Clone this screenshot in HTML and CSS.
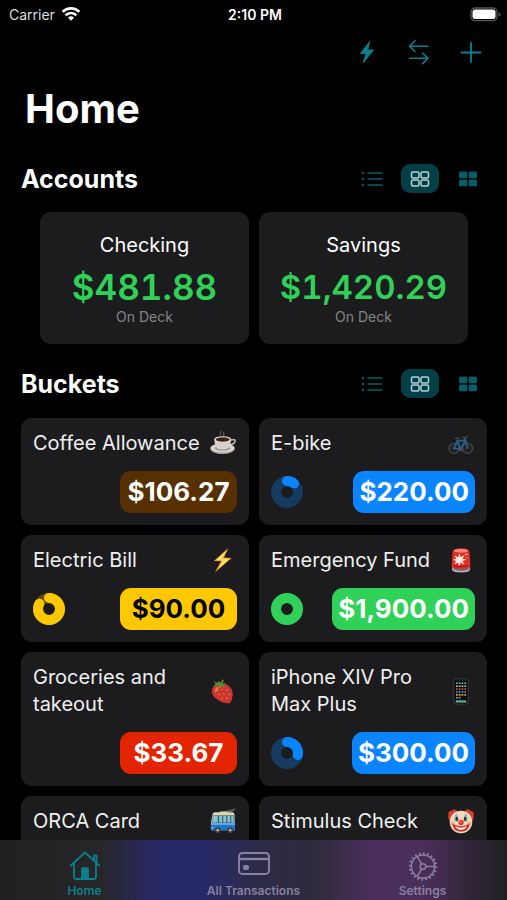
FILE: index.html
```html
<!DOCTYPE html>
<html lang="en">
<head>
    <meta charset="UTF-8">
    <meta name="viewport" content="width=device-width, initial-scale=1">
    <title>Home</title>
    <link rel="stylesheet" href="styles.css">
</head>
<body>

    <!-- shared icons -->
    <svg class="sprite" aria-hidden="true">
        <symbol id="icon-list" viewBox="0 0 22 18">
            <path d="M7 3h14M7 9h14M7 15h14" fill="none" stroke="currentColor" stroke-width="1.5" stroke-linecap="round"/>
            <circle cx="2" cy="3" r="1.2"/><circle cx="2" cy="9" r="1.2"/><circle cx="2" cy="15" r="1.2"/>
        </symbol>
        <symbol id="icon-grid" viewBox="0 0 22 18">
            <g fill="none" stroke="currentColor" stroke-width="1.5">
                <rect x="2.5" y="2" width="7.5" height="6" rx="1.5"/><rect x="12" y="2" width="7.5" height="6" rx="1.5"/>
                <rect x="2.5" y="10" width="7.5" height="6" rx="1.5"/><rect x="12" y="10" width="7.5" height="6" rx="1.5"/>
            </g>
        </symbol>
        <symbol id="icon-grid-fill" viewBox="0 0 22 18">
            <rect x="2" y="1.5" width="8.3" height="6.8" rx="1.5"/><rect x="11.7" y="1.5" width="8.3" height="6.8" rx="1.5"/>
            <rect x="2" y="9.5" width="8.3" height="6.8" rx="1.5"/><rect x="11.7" y="9.5" width="8.3" height="6.8" rx="1.5"/>
        </symbol>
    </svg>

    <div class="status-bar">
        <div class="carrier">
            <span>Carrier</span>
            <svg width="20" height="16" viewBox="0 0 20 16" fill="none" stroke="#fff" stroke-width="2.6">
                <path d="M1.6 5.8a12 12 0 0 1 16.8 0"/>
                <path d="M4.7 9.2a7.6 7.6 0 0 1 10.6 0"/>
                <path d="M10 14.8l-3-3.1a4.4 4.4 0 0 1 6 0z" fill="#fff" stroke="none"/>
            </svg>
        </div>
        <div class="time">2:10 PM</div>
        <div class="battery">
            <svg width="31" height="15" viewBox="0 0 31 15">
                <rect x="1" y="1" width="26" height="12.6" rx="4" fill="none" stroke="#56565a" stroke-width="1.3"/>
                <rect x="2.5" y="2.5" width="23" height="9.6" rx="2.5" fill="#fff"/>
                <path d="M28.6 5.2q2 .6 2 2.1t-2 2.1z" fill="#56565a"/>
            </svg>
        </div>
    </div>

    <div class="toolbar">
        <button type="button" aria-label="Quick add">
            <svg width="28" height="28" viewBox="0 0 28 28" fill="currentColor" stroke="currentColor" stroke-linejoin="round" stroke-width="1">
                <path d="M16.8 3.6L7.4 15.4h5.8l-3 9.4L20.5 12h-6z"/>
            </svg>
        </button>
        <button type="button" aria-label="Transfer">
            <svg width="28" height="28" viewBox="0 0 28 28" fill="none" stroke="currentColor" stroke-width="1.6" stroke-linecap="round" stroke-linejoin="round">
                <path d="M23 8.2H4.6M10 2.8L4.6 8.2l5.4 5.3M4.6 20.3H23M17.6 15l5.4 5.3-5.4 5.3"/>
            </svg>
        </button>
        <button type="button" aria-label="Add">
            <svg width="28" height="28" viewBox="0 0 28 28" fill="none" stroke="currentColor" stroke-width="1.8" stroke-linecap="round">
                <path d="M14 5v19M4.5 14.5h19"/>
            </svg>
        </button>
    </div>

    <main>
        <h1>Home</h1>

        <div class="section-head">
            <h2>Accounts</h2>
            <div class="view-switch">
                <button type="button" aria-label="Accounts as list"><svg><use href="#icon-list"/></svg></button>
                <button type="button" class="active" aria-label="Accounts as grid"><svg><use href="#icon-grid"/></svg></button>
                <button type="button" aria-label="Accounts as compact grid"><svg><use href="#icon-grid-fill"/></svg></button>
            </div>
        </div>

        <div class="accounts">
            <div class="card account">
                <div class="name">Checking</div>
                <div class="balance">$481.88</div>
                <div class="note">On Deck</div>
            </div>
            <div class="card account">
                <div class="name">Savings</div>
                <div class="balance long">$1,420.29</div>
                <div class="note">On Deck</div>
            </div>
        </div>

        <div class="section-head">
            <h2>Buckets</h2>
            <div class="view-switch">
                <button type="button" aria-label="Buckets as list"><svg><use href="#icon-list"/></svg></button>
                <button type="button" class="active" aria-label="Buckets as grid"><svg><use href="#icon-grid"/></svg></button>
                <button type="button" aria-label="Buckets as compact grid"><svg><use href="#icon-grid-fill"/></svg></button>
            </div>
        </div>

        <div class="buckets">
            <div class="card bucket">
                <div class="bucket-top">
                    <div class="name">Coffee Allowance</div>
                    <svg class="emoji" viewBox="0 0 28 28">
                        <path d="M12 5q-2-2 .5-4M14 6q2-2 0-4" fill="none" stroke="#58585a" stroke-width="1.2"/>
                        <ellipse cx="13.5" cy="19.5" rx="12.6" ry="5.3" fill="#aaa69f"/>
                        <ellipse cx="13.5" cy="18.6" rx="12.4" ry="4.8" fill="#d8d5cf"/>
                        <ellipse cx="13.5" cy="19" rx="8" ry="2.6" fill="#928f89"/>
                        <path d="M22 10.5q5-1.5 4.5 1.3-.6 3-6 3.8" fill="none" stroke="#cbc8c2" stroke-width="1.5"/>
                        <path d="M5 9.6q.3 10.2 6 10.6h5q6-.4 6.4-10.6z" fill="#d5d1ca"/>
                        <ellipse cx="13.7" cy="9.6" rx="8.7" ry="3.2" fill="#e8e5df"/>
                        <ellipse cx="13.7" cy="9.8" rx="7.4" ry="2.3" fill="#3b2116"/>
                    </svg>
                </div>
                <div class="bucket-bottom">
                    <div class="amount brown">$106.27</div>
                </div>
            </div>

            <div class="card bucket">
                <div class="bucket-top">
                    <div class="name">E-bike</div>
                    <svg class="emoji" viewBox="0 0 28 28" fill="none">
                        <g stroke="#47484b" stroke-width="1.4">
                            <circle cx="6.8" cy="19" r="5.2"/><circle cx="20.8" cy="19" r="5.2"/>
                            <path d="M6.8 14v10M2 19h10M20.8 14v10M16 19h10M3.5 15.5l6.5 7M24 15.5l-6.5 7" stroke-width=".4"/>
                        </g>
                        <path d="M6.8 19l3.5-8h8L13.5 20zM10.3 10.5l3.2 9.5M18 8.5l2.8 10.5" stroke="#285d8e" stroke-width="1.9"/>
                        <path d="M7.5 8.5h5M15.5 7.5l2.5 1 3-1.5" stroke="#45484c" stroke-width="1.5"/>
                        <circle cx="13.5" cy="20.5" r="1.7" fill="#5a5044"/>
                    </svg>
                </div>
                <div class="bucket-bottom">
                    <svg class="ring blue" viewBox="0 0 32 32">
                        <circle class="track" cx="16" cy="16" r="11"/>
                        <circle class="progress" cx="16" cy="16" r="11" pathLength="100" stroke-dasharray="11 100"/>
                    </svg>
                    <div class="amount blue">$220.00</div>
                </div>
            </div>

            <div class="card bucket">
                <div class="bucket-top">
                    <div class="name">Electric Bill</div>
                    <svg class="emoji" viewBox="0 0 28 28">
                        <path d="M19.5 1L4.5 14.5l7.5.3L5.5 26.5 23 11.5l-8-.5z" fill="#f2a32b"/>
                        <path d="M18.5 3L7 13.5l7 .2-5 9L20.5 12.4l-7.7-.5z" fill="#ffe171"/>
                    </svg>
                </div>
                <div class="bucket-bottom">
                    <svg class="ring yellow" viewBox="0 0 32 32">
                        <circle class="track" cx="16" cy="16" r="11"/>
                        <circle class="progress" cx="16" cy="16" r="11" pathLength="100" stroke-dasharray="83 100"/>
                    </svg>
                    <div class="amount yellow">$90.00</div>
                </div>
            </div>

            <div class="card bucket">
                <div class="bucket-top">
                    <div class="name">Emergency Fund</div>
                    <svg class="emoji" viewBox="0 0 28 28">
                        <path d="M4.5 22.5q0-2.5 2-2.5h15q2 0 2 2.5 0 4-9.5 4t-9.5-4z" fill="#aeb1b5"/>
                        <path d="M6 21.5h16v1.5q-8 3.5-16 0z" fill="#696d72"/>
                        <path d="M5.2 5q.3-3.8 8.8-3.8T22.8 5l.9 15q-.4 3-9.7 3t-9.7-3z" fill="#df3027"/>
                        <path d="M6.5 4.5Q7 2 14 2t7.5 2.5Q18 6 14 6T6.5 4.5z" fill="#f98b7b"/>
                        <path d="M12.5 6.5l1.3 4 3.8-2.3-2 4 4.2.8-4.2 1.5 2 4-3.8-2.3-1.8 4-1-4-4 2 2-3.6-3.5-1.3 3.5-1-1.5-3.5 3.5 2z" fill="#ffe9df"/>
                        <path d="M18 7q3-1 3.5 1l-3.5.5zM18.5 11q3 0 3.5 1.5" fill="#f7a294"/>
                        <path d="M6.5 19q6 3 15 0" fill="none" stroke="#a9161b" stroke-width="1.5"/>
                    </svg>
                </div>
                <div class="bucket-bottom">
                    <svg class="ring green" viewBox="0 0 32 32">
                        <circle class="track" cx="16" cy="16" r="11"/>
                        <circle class="progress" cx="16" cy="16" r="11" pathLength="100" stroke-dasharray="100 100"/>
                    </svg>
                    <div class="amount green">$1,900.00</div>
                </div>
            </div>

            <div class="card bucket">
                <div class="bucket-top">
                    <div class="name">Groceries and takeout</div>
                    <svg class="emoji" viewBox="0 0 28 28">
                        <path d="M2.5 13Q3 7 11 6q6-1 10.5 3.5 4 5 2 11-1 5.5-3.5 6Q8 25 3.5 18q-1.5-3-1-5z" fill="#cc352e"/>
                        <path d="M5 12q3-4 8-3-6 2-6.5 7z" fill="#e96c5c"/>
                        <path d="M2.5 9.5l4-3-2-3 4 1.5L9.5 3l1.5 2L14 1.2l1 1.2-1.5 3 4.5.6-3 1.5 2 3-5-2.5-1 3-2-3.5-4 2.5.5-2z" fill="#5c8a34"/>
                        <g fill="#f5a96e">
                            <circle cx="8" cy="13" r=".7"/><circle cx="13" cy="12" r=".7"/><circle cx="18" cy="12.5" r=".7"/>
                            <circle cx="10" cy="17" r=".7"/><circle cx="15" cy="16.5" r=".7"/><circle cx="20.5" cy="17" r=".7"/>
                            <circle cx="13" cy="21" r=".7"/><circle cx="18" cy="21" r=".7"/>
                        </g>
                    </svg>
                </div>
                <div class="bucket-bottom">
                    <div class="amount red">$33.67</div>
                </div>
            </div>

            <div class="card bucket">
                <div class="bucket-top">
                    <div class="name">iPhone XIV Pro Max Plus</div>
                    <svg class="emoji" viewBox="0 0 28 28">
                        <rect x="6.5" y="1" width="15" height="26" rx="2.5" fill="#0b0c0e" stroke="#48494c" stroke-width=".8"/>
                        <g fill="none" stroke-width="1.6" stroke-dasharray="1.8 1.1">
                            <path d="M8.8 5.5h11" stroke="#55c6b0"/>
                            <path d="M8.8 8.5h11" stroke="#d5c4a2"/>
                            <path d="M8.8 11.5h11" stroke="#d85c42"/>
                            <path d="M8.8 14.5h11" stroke="#4f9fd0"/>
                            <path d="M8.8 17.5h11" stroke="#e2a34f"/>
                            <path d="M8.8 20.5h5" stroke="#9a9da2"/>
                        </g>
                        <path d="M8.5 24.3h11" stroke="#4f8d79" stroke-width="2.2"/>
                        <path d="M9.3 24.3h9.5" stroke="#71d8b1" stroke-width="1.5" stroke-dasharray="1.6 1.1"/>
                    </svg>
                </div>
                <div class="bucket-bottom">
                    <svg class="ring blue" viewBox="0 0 32 32">
                        <circle class="track" cx="16" cy="16" r="11"/>
                        <circle class="progress" cx="16" cy="16" r="11" pathLength="100" stroke-dasharray="28 100"/>
                    </svg>
                    <div class="amount blue">$300.00</div>
                </div>
            </div>

            <div class="card bucket">
                <div class="bucket-top">
                    <div class="name">ORCA Card</div>
                    <svg class="emoji" viewBox="0 0 28 28">
                        <path d="M13 4.5L27 1M16 4.8l9.5-2" stroke="#77797c" stroke-width=".9"/>
                        <rect x="11" y="3.5" width="8" height="2.5" fill="#b4b8a6"/>
                        <path d="M3 7q.5-2.5 3-2.5h17q3 0 3 3l.5 15.5H1.5v-7z" fill="#ded9ad"/>
                        <path d="M3.5 7.5h22l.5 8H2.5z" fill="#3b6573"/>
                        <path d="M4 8h4.5v7H3zM10 8h3v7h-3zM14.3 8h3v7h-3zM18.6 8h2.8v7h-2.8zM22.6 8h2.2l.4 7h-2.6z" fill="#83c5cf"/>
                        <path d="M1.5 16h25v7h-25z" fill="#1e76d2"/>
                        <path d="M1.5 16h25v1.5h-25z" fill="#71b1e6"/>
                        <circle cx="8.5" cy="23" r="3" fill="#3c3e42"/><circle cx="21.5" cy="23" r="3" fill="#3c3e42"/>
                        <circle cx="8.5" cy="23" r="1.4" fill="#a8abae"/><circle cx="21.5" cy="23" r="1.4" fill="#a8abae"/>
                        <circle cx="3" cy="20.5" r=".8" fill="#fff2b8"/>
                    </svg>
                </div>
            </div>

            <div class="card bucket">
                <div class="bucket-top">
                    <div class="name">Stimulus Check</div>
                    <svg class="emoji" viewBox="0 0 28 28">
                        <path d="M4 15Q-.5 11 1 7q-1-4 3-4 3-3 6 0l-3 9zM24 15q4.5-4 3-8 1-4-3-4-3-3-6 0l3 9z" fill="#d93f30"/>
                        <circle cx="14" cy="14.5" r="11.7" fill="#f4d9b9"/>
                        <path d="M9 5q2 3 2.5 8-2 3-4.5 0Q7 8 9 5zM19 5q-2 3-2.5 8 2 3 4.5 0 0-5-2-8z" fill="#86b6d1"/>
                        <ellipse cx="9.7" cy="11.3" rx="1.4" ry="2.2" fill="#333"/><ellipse cx="18.3" cy="11.3" rx="1.4" ry="2.2" fill="#333"/>
                        <circle cx="5.5" cy="16" r="2" fill="#eea189"/><circle cx="22.5" cy="16" r="2" fill="#eea189"/>
                        <path d="M5 16.5q2 .5 4 1.5 5 2 10 0 2-1 4-1.5-.5 7.5-9 8-8.5-.5-9-8z" fill="#d5332a"/>
                        <path d="M8 19q6 3 12 0-1.5 3.5-6 3.5T8 19z" fill="#fff"/>
                        <circle cx="14" cy="15" r="2.8" fill="#df392e"/><circle cx="13.2" cy="14.2" r=".9" fill="#f59584"/>
                    </svg>
                </div>
            </div>
        </div>
    </main>

    <nav class="tab-bar">
        <a href="#home" class="current">
            <svg width="34" height="32" viewBox="0 0 34 32" fill="none" stroke="currentColor" stroke-width="1.8" stroke-linecap="round" stroke-linejoin="round">
                <path d="M2.8 16.5L17 3.5l14.2 13M6 14v13.5q0 2.500 2.5 2.5h17q2.5 0 2.5-2.5V14M26 11.5V6.3h2.5v7.5"/>
                <path d="M14 29.5V20q0-.8.8-.8h4.4q.8 0 .8.8v9.5z" fill="currentColor"/>
            </svg>
            <span>Home</span>
        </a>
        <a href="#transactions">
            <svg width="34" height="32" viewBox="0 0 34 32" fill="none" stroke="currentColor" stroke-width="1.9">
                <rect x="2" y="4" width="30" height="21" rx="3.5"/>
                <path d="M2 10h30" stroke-width="2.4"/>
                <rect x="6.5" y="16.5" width="5" height="4" rx="1" fill="currentColor" stroke-width="1"/>
            </svg>
            <span>All Transactions</span>
        </a>
        <a href="#settings">
            <svg width="34" height="32" viewBox="0 0 34 32" fill="none" stroke="currentColor" stroke-width="1.5">
                <circle cx="17" cy="17.5" r="11.6"/>
                <circle cx="17" cy="17.5" r="13.2" stroke-width="2.2" pathLength="80" stroke-dasharray="1.6 2.4"/>
                <circle cx="17" cy="17.5" r="2.8"/>
                <path d="M19.8 17.5h8.5M15.6 15.1L11.3 7.7M15.6 19.9l-4.3 7.4"/>
            </svg>
            <span>Settings</span>
        </a>
    </nav>

</body>
</html>
```
FILE: styles.css
```css
* {
    box-sizing: border-box;
}
body {
    margin: 0;
    height: 100vh;
    display: flex;
    flex-direction: column;
    overflow: hidden;
    background: #000;
    color: #fff;
    font-family: Inter, "Liberation Sans", sans-serif;
}
button {
    display: flex;
    align-items: center;
    justify-content: center;
    padding: 0;
    border: 0;
    background: none;
    color: inherit;
    cursor: pointer;
}
svg {
    display: block;
    flex-shrink: 0;
}
.sprite {
    display: none;
}

/* status bar */
.status-bar {
    display: grid;
    grid-template-columns: 1fr auto 1fr;
    align-items: center;
    height: 28px;
    padding: 0 6px 0 9px;
    font-size: 14px;
}
.carrier {
    display: flex;
    align-items: center;
    gap: 6px;
    color: #dedede;
}
.time {
    font-weight: 600;
}
.battery {
    justify-self: end;
}

.toolbar {
    display: flex;
    justify-content: flex-end;
    gap: 8px;
    padding: 2px 14px;
    color: #0b7f8e;
}
.toolbar button {
    width: 44px;
    height: 44px;
}

/* content */
main {
    flex: 1;
    min-height: 0;
    overflow-y: auto;
    scrollbar-width: none;
    padding: 9px 20px 20px 21px;
}
h1 {
    margin: 0 0 31px 4px;
    font-size: 40px;
    line-height: 48px;
}
h2 {
    margin: 0;
    font-size: 25px;
    line-height: 28px;
}
.section-head {
    display: flex;
    align-items: center;
    justify-content: space-between;
}
.view-switch {
    display: flex;
    gap: 10px;
    color: #075d67;
}
.view-switch button {
    width: 38px;
    height: 29px;
    border-radius: 9px;
}
.view-switch svg {
    width: 22px;
    height: 18px;
    fill: currentColor;
}
.view-switch .active {
    background: #033f46;
    color: #b5d3d6;
}
.card {
    background: #1c1c1e;
    border-radius: 11px;
}
.name {
    font-size: 20px;
    line-height: 27px;
}
.accounts {
    display: grid;
    grid-template-columns: 1fr 1fr;
    gap: 10px;
    padding: 19px 19px 25px;
}
.account {
    padding: 20px 0 18px;
    text-align: center;
}
.balance {
    margin-top: 7px;
    color: #30d158;
    font-size: 35px;
    font-weight: 600;
    font-variant-numeric: tabular-nums;
    line-height: 42px;
}
.balance.long {
    font-size: 33px;
}
.note {
    color: #848488;
    font-size: 14px;
    line-height: 18px;
}

.buckets {
    display: grid;
    grid-template-columns: 1fr 1fr;
    gap: 10px;
    padding-top: 20px;
}
.bucket {
    display: flex;
    flex-direction: column;
    gap: 14px;
    min-height: 107px;
    padding: 12px;
}
.bucket-top, .bucket-bottom {
    display: flex;
    align-items: center;
    justify-content: space-between;
}
.bucket-top {
    color: #f0f0f0;
}
.emoji {
    width: 28px;
    height: 27px;
}
.ring {
    width: 32px;
    height: 32px;
    fill: none;
    stroke-width: 10px;
}
.ring .progress {
    stroke: currentColor;
    stroke-linecap: round;
    transform: rotate(-90deg);
    transform-origin: center;
}
.ring .track {
    stroke: currentColor;
    opacity: 0.3;
}
.ring.blue {
    color: #0a84ff;
}
.ring.yellow {
    color: #fdc800;
}
.ring.green {
    color: #30d158;
}
.amount {
    min-width: 117px;
    margin-left: auto;
    padding: 0 6px;
    border-radius: 11px;
    font-size: 26px;
    font-weight: 700;
    line-height: 42px;
    text-align: center;
}
.amount.brown {
    background: #583000;
}
.amount.blue {
    background: #0a84ff;
}
.amount.yellow {
    background: #fdc800;
    color: #000;
}
.amount.green {
    background: #30d158;
}
.amount.red {
    background: #e32400;
}

/* tab bar */
.tab-bar {
    display: grid;
    grid-template-columns: repeat(3, 1fr);
    height: 60px;
    background: linear-gradient(90deg, #202020 0%, #27272a 20%, #282a68 31%, #282a68 40%, #2c2b48 51%, #2e2b3e 62%, #4c2f5c 74%, #4a2e59 84%, #2d2434 94%, #202021 100%);
}
.tab-bar a {
    display: flex;
    flex-direction: column;
    align-items: center;
    padding-top: 9px;
    color: #8a809f;
    font-size: 12px;
    font-weight: 600;
    line-height: 20px;
    text-decoration: none;
}
.tab-bar .current {
    color: #0b7f8e;
}
```
